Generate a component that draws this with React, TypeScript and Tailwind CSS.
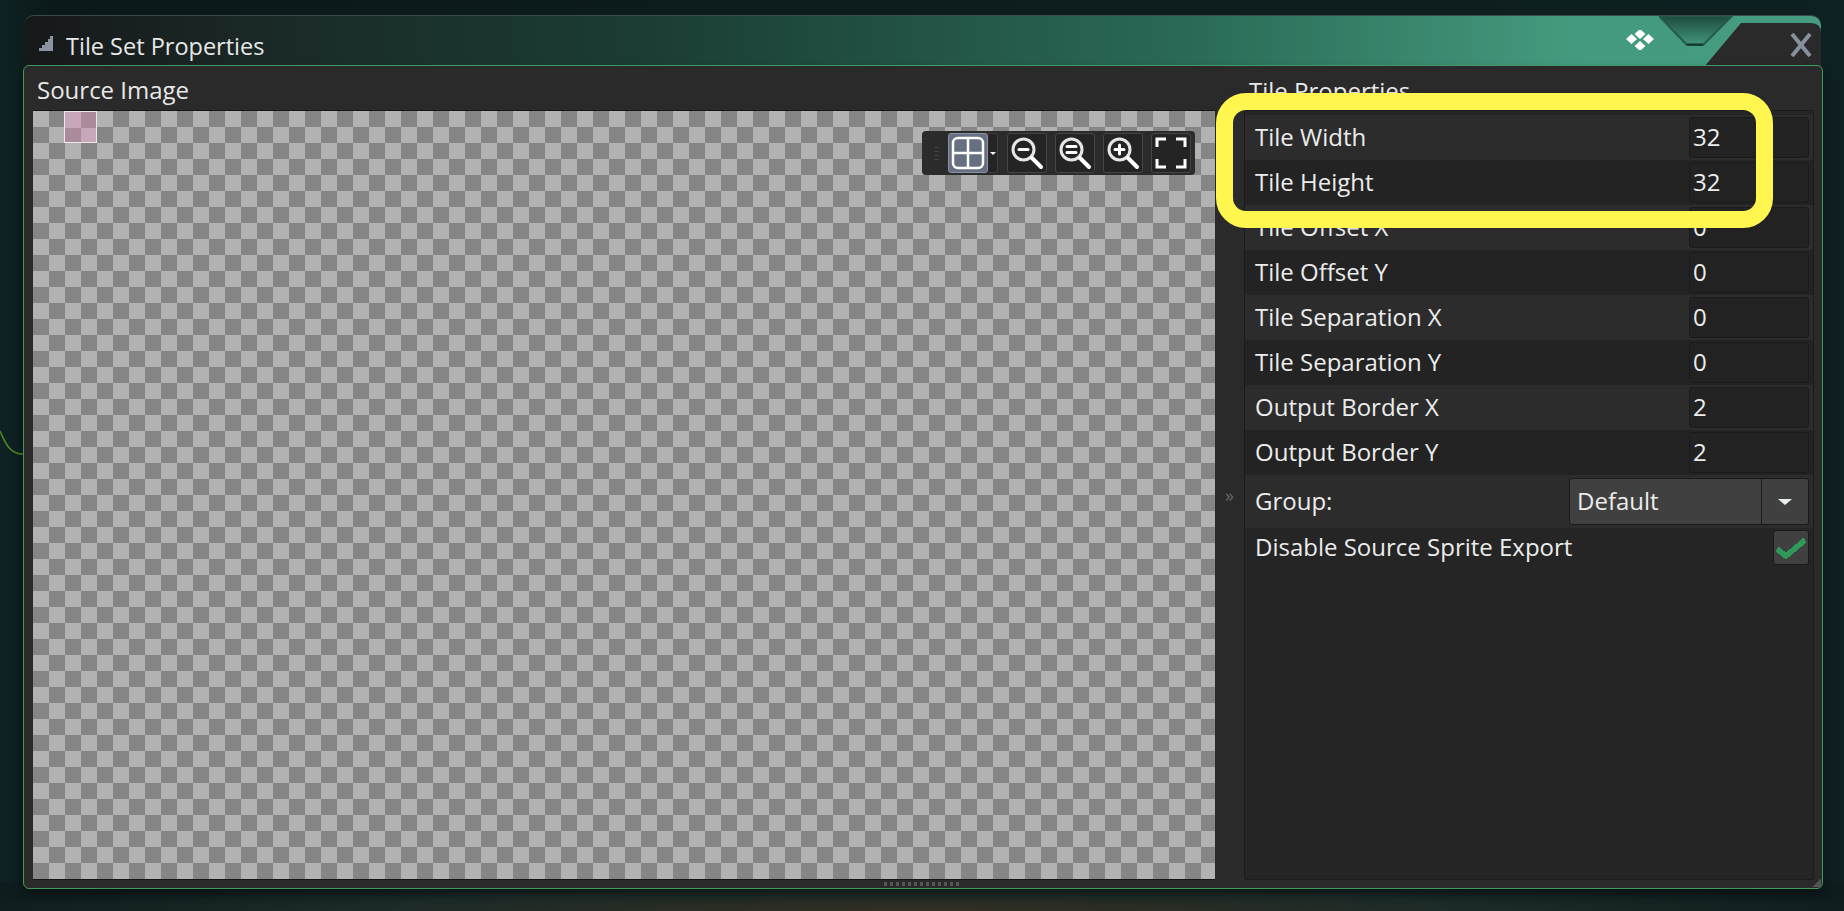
const rows: [string, string][] = [
  ["Tile Width", "32"],
  ["Tile Height", "32"],
  ["Tile Offset X", "0"],
  ["Tile Offset Y", "0"],
  ["Tile Separation X", "0"],
  ["Tile Separation Y", "0"],
  ["Output Border X", "2"],
  ["Output Border Y", "2"],
];

function Magnifier({ kind }: { kind: "minus" | "equal" | "plus" }) {
  return (
    <svg width="34" height="34" viewBox="0 0 34 34" fill="none" stroke="#fff" strokeLinecap="round">
      <circle cx="13.5" cy="13.5" r="10.5" strokeWidth="3" stroke="#e6e6e6" />
      <path d="M22 22 L31 31" strokeWidth="4" />
      {kind === "minus" && <path d="M9 13.5 H18" strokeWidth="3" />}
      {kind === "equal" && <path d="M9 10.5 H18 M9 16.5 H18" strokeWidth="3" />}
      {kind === "plus" && <path d="M9 13.5 H18 M13.5 9 V18" strokeWidth="3" />}
    </svg>
  );
}

function ToolButton({ children }: { children: React.ReactNode }) {
  return (
    <div className="flex h-10 w-10 items-center justify-center rounded-[3px] border border-[#444444] bg-[#242424]">
      {children}
    </div>
  );
}

function Toolbar() {
  return (
    <div className="absolute left-[889px] top-[20px] flex h-11 w-[273px] items-center rounded-[4px] bg-[#2b2b2b]">
      <div className="ml-[12px] flex w-[5px] flex-col gap-[3px]">
        <div className="h-px bg-[#444444]" />
        <div className="h-px bg-[#444444]" />
        <div className="h-px bg-[#444444]" />
        <div className="h-px bg-[#444444]" />
      </div>
      <div className="ml-[9px] flex h-10 w-10 items-center justify-center rounded-[3px] border border-[#8a93a3] bg-[#667080]">
        <svg width="34" height="34" viewBox="0 0 34 34" fill="none" stroke="#fff" strokeWidth="2.5">
          <rect x="2" y="2" width="30" height="30" rx="5" />
          <path d="M17 2 V32 M2 17 H32" />
        </svg>
      </div>
      <div className="flex h-10 w-[10px] items-center justify-center rounded-r-[3px] border border-l-0 border-[#3d3d3d] bg-[#242424]">
        <div className="h-0 w-0 border-x-[3px] border-t-[3px] border-x-transparent border-t-white" />
      </div>
      <div className="ml-[9px] flex gap-2">
        <ToolButton><Magnifier kind="minus" /></ToolButton>
        <ToolButton><Magnifier kind="equal" /></ToolButton>
        <ToolButton><Magnifier kind="plus" /></ToolButton>
        <ToolButton>
          <svg width="34" height="34" viewBox="0 0 34 34" fill="none" stroke="#fff" strokeWidth="3">
            <path d="M3 11 V3 H12 M22 3 H31 V11 M31 23 V31 H22 M12 31 H3 V23" />
          </svg>
        </ToolButton>
      </div>
    </div>
  );
}

function TitleBar() {
  return (
    <div className="relative ml-[24px] flex h-[51px] w-[1797px] items-center overflow-hidden rounded-t-[10px] border-t border-[#3a4a46] bg-[linear-gradient(90deg,#171819_0%,#1a2a28_14%,#1b3d35_35%,#2a6a56_65%,#449a7e_86%,#459c80_100%)] pt-[5px]">
      <svg className="ml-[15px] shrink-0" width="14" height="15" viewBox="0 0 14 15" fill="#8a94a0" shapeRendering="crispEdges">
        <path d="M0 15 V12 H3 V9 H6 V6 H9 V3 H11 V0 H14 V15 Z" />
      </svg>
      <span className="ml-[13px] mt-[7px] text-[23.5px] leading-none text-[#e8e8e8]">Tile Set Properties</span>
      <svg className="absolute left-[1602px] top-[14px]" width="28" height="20" viewBox="0 0 28 20" fill="#fff">
        <path d="M14 0 L19.5 5 L14 10 L8.5 5 Z" transform="translate(0 -1)" />
        <path d="M14 10 L19.5 15 L14 20 L8.5 15 Z" transform="translate(0 1)" />
        <path d="M6.5 4 L12 9.5 L6.5 15 L1 9.5 Z" transform="translate(-1 .5) scale(1 .9)" />
        <path d="M21.5 4 L27 9.5 L21.5 15 L16 9.5 Z" transform="translate(1 .5) scale(1 .9)" />
      </svg>
      <svg className="absolute left-[1635px] top-0" width="162" height="51" viewBox="0 0 162 51">
        <defs>
          <linearGradient id="notch" x1="0" x2="0" y1="0" y2="1">
            <stop offset="0" stopColor="#1c4a3e" />
            <stop offset="0.9" stopColor="#3f8f75" />
          </linearGradient>
        </defs>
        <path d="M0 0 H73 L44 29 H28 Z" fill="url(#notch)" stroke="#25594a" strokeWidth="2" />
        <path d="M28 28.5 H44" stroke="#12362e" strokeWidth="2" />
        <path d="M82 7 H152 Q162 7 162 17 V51 H45 Z" fill="#2a2a2a" />
      </svg>
      <svg className="absolute left-[1766px] top-[17px]" width="22" height="24" viewBox="0 0 22 24" fill="none" stroke="#87919e" strokeWidth="4">
        <path d="M2 1 L20 23 M20 1 L2 23" />
      </svg>
    </div>
  );
}

function PropertyRow({ label, value, odd }: { label: string; value: string; odd: boolean }) {
  return (
    <div className={`flex h-[45px] items-center justify-between pl-[10px] pr-[4px] ${odd ? "bg-[#2c2c2c]" : "bg-[#232323]"}`}>
      <span className="pb-[2px] text-[24px] leading-none text-[#ececec]">{label}</span>
      <div className="flex h-[41px] w-[120px] items-center rounded-[3px] border border-[#1a1a1a] bg-[#222222] pb-[2px] pl-[3px] text-[24px] leading-none text-[#ececec]">
        {value}
      </div>
    </div>
  );
}

export default function App() {
  return (
    <div className="relative h-[911px] w-full overflow-hidden bg-[linear-gradient(90deg,#0f2223_0%,#0a1819_3%,#0d1c1d_50%,#0e2021_100%)] pt-[15px] font-['Open_Sans',sans-serif]">
      <div className="pointer-events-none absolute inset-x-0 bottom-0 h-[30px] bg-[radial-gradient(ellipse_at_50%_100%,#332f22_0%,#1b2a28_45%,#0e1c1d_75%)]" />
      <svg className="absolute left-0 top-[428px]" width="24" height="30" viewBox="0 0 24 30" fill="none" stroke="#4f8a1e" strokeWidth="1.5">
        <path d="M0 3 C5 14 9 26 23 26" />
      </svg>

      <div className="relative">
        <TitleBar />
        <div className="relative -mt-px ml-[23px] flex h-[824px] w-[1800px] rounded-[6px] border border-[#3f9a5e] bg-[#2a2a2a] pl-[9px] pr-[8px] shadow-[0_6px_10px_rgba(0,0,0,0.35)]">
          <div className="flex w-[1182px] shrink-0 flex-col">
            <div className="flex h-[44px] shrink-0 items-center pl-[4px] pt-[3px] text-[24px] leading-none text-[#e8e8e8]">Source Image</div>
            <div className="relative h-[770px] border-y border-[#151515] bg-[repeating-conic-gradient(#868686_0_25%,#b2b2b2_0_50%)] bg-[length:32px_32px]">
              <div className="absolute left-[31px] top-0 h-8 w-[33px] border border-[#f0e6ea] bg-[repeating-conic-gradient(#ab8a9c_0_25%,#c7a8ba_0_50%)] bg-[length:32px_32px]" />
              <Toolbar />
            </div>
          </div>

          <div className="flex w-[29px] shrink-0 items-center justify-center pt-[36px] text-[18px] leading-none text-[#666666]">»</div>

          <div className="flex w-[570px] shrink-0 flex-col">
            <div className="flex h-[44px] shrink-0 items-center pl-[5px] pt-[5px] text-[24px] leading-none text-[#e8e8e8]">Tile Properties</div>
            <div className="h-[770px] rounded-[2px] border border-[#1b1b1b] bg-[#252525] pt-[4px]">
              {rows.map(([label, value], i) => (
                <PropertyRow key={label} label={label} value={value} odd={i % 2 === 0} />
              ))}
              <div className="flex h-[53px] items-center justify-between bg-[#2c2c2c] pl-[10px] pr-[4px]">
                <span className="pb-[2px] text-[24px] leading-none text-[#ececec]">Group:</span>
                <div className="flex h-[47px] w-[240px] items-center rounded-[3px] border border-[#1a1a1a] bg-[#404040]">
                  <span className="flex-1 pb-[2px] pl-[7px] text-[24px] leading-none text-[#ececec]">Default</span>
                  <div className="flex h-full w-[47px] items-center justify-center border-l border-[#1a1a1a]">
                    <div className="h-0 w-0 border-x-[7px] border-t-[6px] border-x-transparent border-t-[#e8f0ec]" />
                  </div>
                </div>
              </div>
              <div className="flex h-[39px] items-center justify-between pl-[10px] pr-[4px]">
                <span className="pb-[2px] text-[24px] leading-none text-[#ececec]">Disable Source Sprite Export</span>
                <div className="flex h-[35px] w-[36px] items-center justify-center rounded-[3px] border border-[#1a1a1a] bg-[#404040]">
                  <svg width="30" height="24" viewBox="0 0 30 24" fill="none" stroke="#2f9a58" strokeWidth="5.5" shapeRendering="crispEdges">
                    <path d="M1 13 L10 20 L29 4" />
                  </svg>
                </div>
              </div>
            </div>
          </div>

          <div className="absolute bottom-[2px] left-[860px] h-[4px] w-[78px] bg-[repeating-linear-gradient(90deg,#555555_0_3px,transparent_3px_6px)]" />
          <div className="absolute bottom-[1px] right-[1px] h-[8px] w-[8px] bg-[linear-gradient(135deg,transparent_50%,#555555_50%)]" />
        </div>
      </div>

      <div className="absolute left-[1216px] top-[93px] h-[135px] w-[557px] rounded-[30px] border-[17px] border-[#fff64f] shadow-[0_0_1px_rgba(0,0,0,0.6)]" />
    </div>
  );
}
